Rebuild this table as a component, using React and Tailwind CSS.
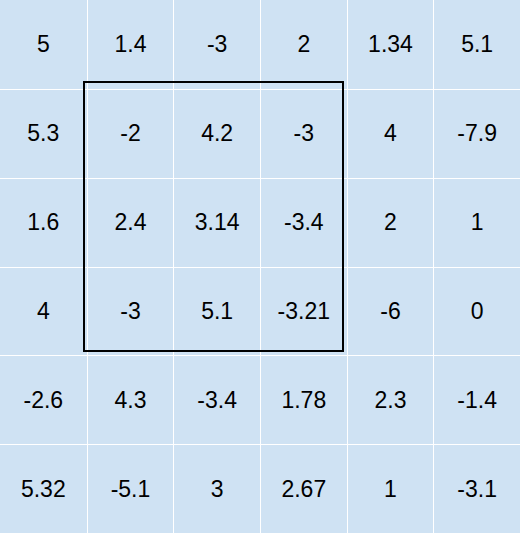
const rows = [
  ['5', '1.4', '-3', '2', '1.34', '5.1'],
  ['5.3', '-2', '4.2', '-3', '4', '-7.9'],
  ['1.6', '2.4', '3.14', '-3.4', '2', '1'],
  ['4', '-3', '5.1', '-3.21', '-6', '0'],
  ['-2.6', '4.3', '-3.4', '1.78', '2.3', '-1.4'],
  ['5.32', '-5.1', '3', '2.67', '1', '-3.1'],
]

export default function App() {
  return (
    <div
      className="relative w-[520px] h-[533px] bg-[#cfe2f3] text-black text-[23px]"
      style={{ fontFamily: '"Liberation Sans", Arial, sans-serif' }}
    >
      <div className="grid grid-cols-6 grid-rows-6 w-full h-full">
        {rows.map((row, r) =>
          row.map((v, c) => (
            <div
              key={r + '-' + c}
              className={
                'flex items-center justify-center border-white ' +
                (c > 0 ? 'border-l ' : '') +
                (r > 0 ? 'border-t' : '')
              }
            >
              {v}
            </div>
          ))
        )}
      </div>
      <div className="absolute left-[83px] top-[81px] w-[261px] h-[271px] border-2 border-black pointer-events-none" />
    </div>
  )
}
